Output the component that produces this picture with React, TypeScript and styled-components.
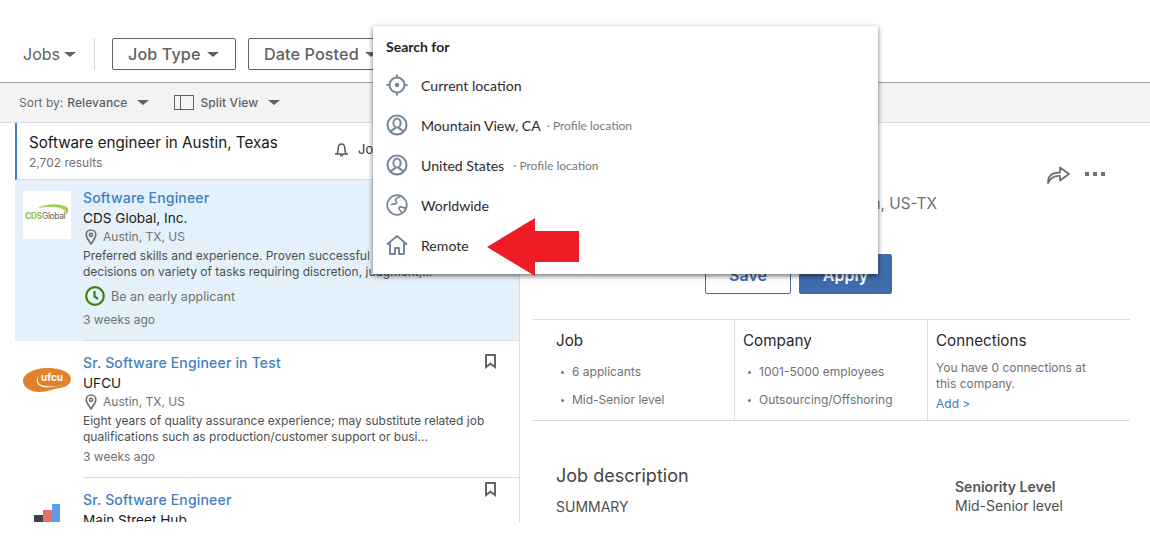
import * as React from 'react';
import styled, { createGlobalStyle } from 'styled-components';

const GlobalStyle = createGlobalStyle`
  html, body {
    margin: 0;
    padding: 0;
    background: #fff;
  }
  * {
    box-sizing: border-box;
  }
`;

const uiFont = 'Inter, "Liberation Sans", sans-serif';

const Page = styled.div`
  position: relative;
  width: 1150px;
  height: 522px;
  overflow: hidden;
  font-family: ${uiFont};
  color: #000;
`;

const TopBar = styled.header`
  height: 83px;
  padding: 38px 0 0 23px;
  display: flex;
  align-items: flex-start;
  border-bottom: 1px solid #a4a4a4;
  position: relative;
`;

const JobsMenu = styled.div`
  display: flex;
  align-items: center;
  gap: 4px;
  height: 32px;
  padding-right: 18px;
  margin-right: 17px;
  font-size: 16px;
  color: #5f6163;
  border-right: 1px solid #d8d8d8;
`;

const FilterButton = styled.div<{ $w: number }>`
  display: flex;
  align-items: center;
  gap: 6px;
  height: 32px;
  width: ${(p) => p.$w}px;
  margin-right: 12px;
  padding-left: 15px;
  border: 1px solid #5f6163;
  border-radius: 2px;
  font-size: 16.2px;
  font-weight: 500;
  letter-spacing: 0.1px;
  color: #5f6163;
  white-space: nowrap;
  flex-shrink: 0;
`;

const Caret = styled.span<{ $size?: number; $color?: string }>`
  display: inline-block;
  width: 0;
  height: 0;
  border-left: ${(p) => p.$size ?? 6}px solid transparent;
  border-right: ${(p) => p.$size ?? 6}px solid transparent;
  border-top: ${(p) => (p.$size ?? 6) - 1}px solid ${(p) => p.$color ?? '#5f6163'};
`;

const SortBar = styled.div`
  height: 40px;
  padding-left: 19px;
  display: flex;
  align-items: center;
  background: #f3f3f3;
  border-bottom: 1px solid #dcdcdc;
  font-size: 12px;
  color: #6a6c6e;
`;

const SortGroup = styled.div`
  display: flex;
  align-items: center;
  margin-right: 25px;
`;

const SortValue = styled.span`
  margin-left: 4px;
  margin-right: 10px;
  font-weight: 500;
  letter-spacing: 0.1px;
  color: #5f6163;
`;

const SplitIcon = styled.span`
  width: 20px;
  height: 15px;
  margin-right: 2px;
  border: 1.5px solid #5f6163;
  position: relative;
  &::before {
    content: "";
    position: absolute;
    left: 5px;
    top: 0;
    bottom: 0;
    border-left: 1.5px solid #5f6163;
  }
`;

const Body = styled.div`
  display: flex;
`;

const LeftColumn = styled.section`
  width: 505px;
  margin-left: 15px;
  flex-shrink: 0;
  border-right: 1px solid #dcdcdc;
  height: 399px;
`;

const ResultsHead = styled.div`
  height: 57px;
  padding: 10px 0 0 12px;
  border-left: 2px solid #3f7fc1;
  border-bottom: 1px solid #dcdcdc;
  position: relative;
`;

const ResultsTitle = styled.div`
  font-size: 15.2px;
  line-height: 20px;
  color: #1a1a1a;
`;

const ResultsCount = styled.div`
  margin-top: 1px;
  font-size: 12px;
  line-height: 18px;
  color: #6f7173;
`;

const AlertToggle = styled.div`
  position: absolute;
  left: 317px;
  top: 18px;
  display: flex;
  align-items: center;
  gap: 9px;
  font-size: 13px;
  white-space: nowrap;
  color: #333;
`;

const JobCard = styled.article<{ $active?: boolean; $height: number; $pad: number }>`
  position: relative;
  height: ${(p) => p.$height}px;
  padding: ${(p) => p.$pad}px 0 0 8px;
  display: flex;
  background: ${(p) => (p.$active ? '#e4f1fa' : '#fff')};
`;

const LogoSlot = styled.div<{ $white?: boolean }>`
  width: 48px;
  height: 48px;
  margin: 3px 12px 0 0;
  flex-shrink: 0;
  display: flex;
  align-items: center;
  justify-content: center;
  background: ${(p) => (p.$white ? '#fff' : 'transparent')};
`;

const CardBody = styled.div<{ $rule?: boolean }>`
  flex: 1;
  min-width: 0;
  height: 100%;
  border-bottom: ${(p) => (p.$rule ? '1px solid #dcdcdc' : 'none')};
`;

const JobTitle = styled.div`
  font-size: 14px;
  line-height: 20px;
  font-weight: 500;
  letter-spacing: 0.18px;
  color: #3f7fc1;
  white-space: nowrap;
`;

const Company = styled.div`
  font-size: 13.6px;
  line-height: 20px;
  color: #1a1a1a;
`;

const LocationRow = styled.div`
  display: flex;
  align-items: center;
  gap: 6px;
  margin: 1px 0 0 2px;
  font-size: 12px;
  line-height: 16px;
  color: #6f7173;
`;

const Snippet = styled.div`
  margin-top: 3px;
  width: 404px;
  font-size: 12px;
  line-height: 16px;
  color: #4d4f51;
`;

const EarlyRow = styled.div`
  display: flex;
  align-items: center;
  gap: 6px;
  margin: 5px 0 0 2px;
  height: 22px;
  font-size: 12.5px;
  color: #6f7173;
`;

const TimeAgo = styled.div<{ $gap: number }>`
  margin-top: ${(p) => p.$gap}px;
  font-size: 12px;
  line-height: 16px;
  color: #6f7173;
`;

const BookmarkSlot = styled.span<{ $top: number }>`
  position: absolute;
  right: 23px;
  top: ${(p) => p.$top}px;
  line-height: 0;
`;

const Detail = styled.section`
  flex: 1;
  padding: 0 20px 0 13px;
  position: relative;
  min-width: 0;
`;

const DetailTop = styled.div`
  height: 196px;
  position: relative;
`;

const DetailActions = styled.div`
  position: absolute;
  right: 25px;
  top: 41px;
  display: flex;
  align-items: center;
  gap: 14px;
`;

const Dots = styled.span`
  display: flex;
  gap: 4px;
  & > i {
    width: 4px;
    height: 4px;
    background: #6f7173;
  }
`;

const LocationLine = styled.div`
  position: absolute;
  left: 0;
  right: 193px;
  top: 71px;
  text-align: right;
  font-size: 15.4px;
  line-height: 20px;
  color: #6f7173;
`;

const ButtonRow = styled.div`
  position: absolute;
  left: 172px;
  top: 131px;
  display: flex;
  gap: 8px;
`;

const SaveButton = styled.div`
  width: 86px;
  height: 40px;
  display: flex;
  align-items: center;
  justify-content: center;
  padding-top: 2px;
  border: 1px solid #3f6cad;
  border-radius: 2px;
  color: #3f6cad;
  font-size: 16px;
  font-weight: 600;
`;

const ApplyButton = styled(SaveButton)`
  width: 93px;
  background: #3f6cad;
  color: #fff;
`;

const Stats = styled.div`
  display: flex;
  height: 102px;
  border-top: 1px solid #dcdcdc;
  border-bottom: 1px solid #dcdcdc;
`;

const StatCol = styled.div<{ $w: number; $pad: number }>`
  width: ${(p) => p.$w}px;
  flex-shrink: 0;
  padding: 11px 0 0 ${(p) => p.$pad}px;
  & + & {
    border-left: 1px solid #dcdcdc;
  }
`;

const StatTitle = styled.div`
  font-size: 15.2px;
  line-height: 20px;
  color: #2a2a2a;
`;

const StatList = styled.ul`
  list-style: none;
  margin: 13px 0 0 0;
  padding: 0;
`;

const StatItem = styled.li`
  position: relative;
  padding-left: 16px;
  font-size: 12px;
  line-height: 16px;
  color: #6f7173;
  white-space: nowrap;
  & + & {
    margin-top: 12px;
  }
  &::before {
    content: "";
    position: absolute;
    left: 5px;
    top: 7px;
    width: 3px;
    height: 3px;
    border-radius: 50%;
    background: #77797b;
  }
`;

const StatText = styled.div`
  margin-top: 9px;
  font-size: 12px;
  line-height: 16px;
  color: #6f7173;
  width: 150px;
`;

const AddLink = styled.div`
  margin-top: 4px;
  font-size: 12px;
  line-height: 16px;
  color: #3a76c0;
`;

const Description = styled.div`
  display: flex;
  justify-content: space-between;
  padding: 43px 0 0 23px;
`;

const DescriptionHead = styled.h2`
  margin: 0;
  font-size: 18px;
  line-height: 24px;
  font-weight: 400;
  color: #444;
`;

const DescriptionText = styled.div<{ $gap: number }>`
  margin-top: ${(p) => p.$gap}px;
  font-size: 14px;
  line-height: 18px;
  color: #4d4f51;
  white-space: nowrap;
`;

const Criteria = styled.div`
  width: 175px;
  padding-top: 13px;
  font-size: 14px;
  line-height: 20px;
  color: #4d4f51;
`;

const CriteriaLabel = styled.div`
  margin-bottom: -1px;
  font-weight: 600;
  color: #55575a;
`;

const Dropdown = styled.div`
  position: absolute;
  left: 373px;
  top: 26px;
  width: 505px;
  height: 248px;
  padding: 11px 13px 0;
  background: #fff;
  box-shadow: 0 2px 5px rgba(0, 0, 0, 0.55);
  font-family: Lato, "Liberation Sans", sans-serif;
`;

const DropdownTitle = styled.div`
  font-size: 14px;
  line-height: 20px;
  font-weight: 700;
  color: #1f1f1f;
  margin-bottom: 8px;
`;

const DropdownRow = styled.div`
  display: flex;
  align-items: center;
  height: 40px;
  font-size: 14.1px;
  color: #2b2b2b;
`;

const RowIcon = styled.span`
  width: 22px;
  margin-right: 13px;
  line-height: 0;
  flex-shrink: 0;
`;

const RowNote = styled.span<{ $gap: number }>`
  margin-left: ${(p) => p.$gap}px;
  font-size: 12px;
  color: #77797b;
`;

const ArrowOverlay = styled.svg`
  position: absolute;
  left: 487px;
  top: 218px;
`;

const PinIcon = () => (
  <svg width="12" height="16" viewBox="0 0 12 16" fill="none" stroke="#6f7173" strokeWidth="1.6">
    <path d="M6 15C4 11.5 1.2 9 1.2 5.8a4.8 4.8 0 0 1 9.6 0C10.800 9 8 11.500 6 15z" />
    <circle cx="6" cy="5.800" r="1.600" />
  </svg>
);

const BookmarkIcon = () => (
  <svg width="11" height="15" viewBox="0 0 11 15" fill="none" stroke="#626466" strokeWidth="2">
    <path d="M1 1h9v12L5.500 9.800 1 13z" />
  </svg>
);

const BellIcon = () => (
  <svg width="15" height="15" viewBox="0 0 15 15" fill="none" stroke="#55575a" strokeWidth="1.500">
    <path d="M1 12h13M3 12c1-2 1-3.500 1.200-6 .2-2.500 1.500-4 3.300-4s3.100 1.500 3.300 4c.2 2.500.2 4 1.200 6" />
    <path d="M6 13.500h3" />
  </svg>
);

const ClockIcon = () => (
  <svg width="20" height="20" viewBox="0 0 20 20" fill="none" stroke="#3f7f12" strokeWidth="2.200">
    <circle cx="10" cy="10" r="8.800" />
    <path d="M9.500 5v5.500l3.500 2.500" />
  </svg>
);

const ShareIcon = () => (
  <svg width="24" height="20" viewBox="0 0 24 20" fill="none" stroke="#6f7173" strokeWidth="1.800">
    <path d="M1 19c0-7 4-10.500 12-10.500V3.500L22 10l-9 6.500v-4.500c-5.500-.5-9 1-12 7z" strokeLinejoin="round" />
  </svg>
);

const iconStroke = '#77879a';

const TargetIcon = () => (
  <svg width="22" height="22" viewBox="0 0 22 22" fill="none" stroke={iconStroke} strokeWidth="2">
    <circle cx="11" cy="11" r="7.500" />
    <circle cx="11" cy="11" r="1.300" fill={iconStroke} />
    <path d="M11 0.500v3M11 18.500v3M0.500 11h3M18.500 11h3" />
  </svg>
);

const ProfileIcon = () => (
  <svg width="22" height="22" viewBox="0 0 22 22" fill="none" stroke={iconStroke} strokeWidth="2">
    <circle cx="11" cy="11" r="9.500" />
    <ellipse cx="11" cy="9" rx="3.600" ry="4.600" />
    <path d="M4.500 18c1-3 4.500-2.500 5-4.500M17.500 18c-1-3-4.500-2.500-5-4.500" />
  </svg>
);

const GlobeIcon = () => (
  <svg width="22" height="22" viewBox="0 0 22 22" fill="none" stroke={iconStroke} strokeWidth="1.700">
    <circle cx="11" cy="11" r="9.800" />
    <path d="M14 1.600c-1 2.400-3.500 2-4.500 3.900-.8 1.600 2 2.200 1 3.700-1 1.400-4 0-5.500 1.800M16 19c-.5-2.500-3-2.500-3-4.800 0-1.700 2.700-1.500 4-.7 1 .6 2.200.5 3.500-.3" />
  </svg>
);

const HomeIcon = () => (
  <svg width="22" height="22" viewBox="0 0 22 22" fill="none" stroke={iconStroke} strokeWidth="2">
    <path d="M1 10.500L11 2l10 8.500M4 8.500V20h5v-6h4v6h5V8.500" strokeLinejoin="round" />
  </svg>
);

const CdsLogo = () => (
  <svg width="46" height="24" viewBox="0 0 46 24">
    <path d="M14 5C22 0 38 0 44 5c1 2 0 5-2 7 1-5-6-8-13-8-6 0-11 0-15 1z" fill="#a6cf5a" />
    <text x="1" y="16" fontFamily="Inter, sans-serif" fontSize="8.500" fontWeight="700" fill="#8cc63f" letterSpacing="-0.500">CDS</text>
    <text x="18" y="16" fontFamily="Inter, sans-serif" fontSize="8.500" fill="#5d5f61" letterSpacing="-0.400">Global</text>
  </svg>
);

const UfcuLogo = () => (
  <svg width="48" height="24" viewBox="0 0 48 24">
    <path d="M0 13C0 6 11 0 25 0c12 0 23 4 23 11 0 5-5 8-11 9C29 21 24 24 17 24 7 24 0 19 0 13z" fill="#e1812c" />
    <path d="M15 8c-1 5 0 9 7 10 8 1 16 0 22-3-6 3-16 5-23 4C14 18 12 13 15 8z" fill="#fff" />
    <text x="18" y="13" fontFamily="Inter, sans-serif" fontSize="10" fontWeight="700" fill="#fff">ufcu</text>
  </svg>
);

const HubLogo = () => (
  <svg width="28" height="48" viewBox="0 0 28 48">
    <rect x="1" y="22" width="9" height="26" fill="#3f424a" />
    <rect x="10" y="17" width="9" height="31" fill="#e8705f" />
    <rect x="19" y="11" width="8" height="37" fill="#5e9bea" />
  </svg>
);

const jobsStats = ['6 applicants', 'Mid-Senior level'];
const companyStats = ['1001-5000 employees', 'Outsourcing/Offshoring'];

const App = () => (
  <Page>
    <GlobalStyle />
    <TopBar>
      <JobsMenu>
        Jobs
        <Caret />
      </JobsMenu>
      <FilterButton $w={124}>
        Job Type
        <Caret />
      </FilterButton>
      <FilterButton $w={134}>
        Date Posted
        <Caret />
      </FilterButton>
    </TopBar>
    <SortBar>
      <SortGroup>
        Sort by:
        <SortValue>Relevance</SortValue>
        <Caret />
      </SortGroup>
      <SortGroup>
        <SplitIcon />
        <SortValue>Split View</SortValue>
        <Caret />
      </SortGroup>
    </SortBar>
    <Body>
      <LeftColumn>
        <ResultsHead>
          <ResultsTitle>Software engineer in Austin, Texas</ResultsTitle>
          <ResultsCount>2,702 results</ResultsCount>
          <AlertToggle>
            <BellIcon />
            Job alert
          </AlertToggle>
        </ResultsHead>
        <JobCard $active $height={161} $pad={8}>
          <LogoSlot $white>
            <CdsLogo />
          </LogoSlot>
          <CardBody $rule>
            <JobTitle>Software Engineer</JobTitle>
            <Company>CDS Global, Inc.</Company>
            <LocationRow>
              <PinIcon />
              Austin, TX, US
            </LocationRow>
            <Snippet>
              Preferred skills and experience. Proven successful experience making
              <br />
              decisions on variety of tasks requiring discretion, judgment,...
            </Snippet>
            <EarlyRow>
              <ClockIcon />
              Be an early applicant
            </EarlyRow>
            <TimeAgo $gap={5}>3 weeks ago</TimeAgo>
          </CardBody>
        </JobCard>
        <JobCard $height={137} $pad={12}>
          <LogoSlot>
            <UfcuLogo />
          </LogoSlot>
          <CardBody $rule>
            <JobTitle>Sr. Software Engineer in Test</JobTitle>
            <Company>UFCU</Company>
            <LocationRow>
              <PinIcon />
              Austin, TX, US
            </LocationRow>
            <Snippet>
              Eight years of quality assurance experience; may substitute related job
              qualifications such as production/customer support or busi...
            </Snippet>
            <TimeAgo $gap={4}>3 weeks ago</TimeAgo>
          </CardBody>
          <BookmarkSlot $top={13}>
            <BookmarkIcon />
          </BookmarkSlot>
        </JobCard>
        <JobCard $height={60} $pad={12}>
          <LogoSlot>
            <HubLogo />
          </LogoSlot>
          <CardBody>
            <JobTitle>Sr. Software Engineer</JobTitle>
            <Company>Main Street Hub</Company>
          </CardBody>
          <BookmarkSlot $top={4}>
            <BookmarkIcon />
          </BookmarkSlot>
        </JobCard>
      </LeftColumn>
      <Detail>
        <DetailTop>
          <DetailActions>
            <ShareIcon />
            <Dots>
              <i />
              <i />
              <i />
            </Dots>
          </DetailActions>
          <LocationLine>Austin, US-TX</LocationLine>
          <ButtonRow>
            <SaveButton>Save</SaveButton>
            <ApplyButton>Apply</ApplyButton>
          </ButtonRow>
        </DetailTop>
        <Stats>
          <StatCol $w={201} $pad={23}>
            <StatTitle>Job</StatTitle>
            <StatList>
              {jobsStats.map((s) => <StatItem key={s}>{s}</StatItem>)}
            </StatList>
          </StatCol>
          <StatCol $w={193} $pad={8}>
            <StatTitle>Company</StatTitle>
            <StatList>
              {companyStats.map((s) => <StatItem key={s}>{s}</StatItem>)}
            </StatList>
          </StatCol>
          <StatCol $w={203} $pad={8}>
            <StatTitle>Connections</StatTitle>
            <StatText>You have 0 connections at this company.</StatText>
            <AddLink>Add &gt;</AddLink>
          </StatCol>
        </Stats>
        <Description>
          <div>
            <DescriptionHead>Job description</DescriptionHead>
            <DescriptionText $gap={10}>SUMMARY</DescriptionText>
            <DescriptionText $gap={3}>Works with the development team to build and</DescriptionText>
          </div>
          <Criteria>
            <CriteriaLabel>Seniority Level</CriteriaLabel>
            Mid-Senior level
          </Criteria>
        </Description>
      </Detail>
    </Body>
    <Dropdown>
      <DropdownTitle>Search for</DropdownTitle>
      <DropdownRow>
        <RowIcon><TargetIcon /></RowIcon>
        Current location
      </DropdownRow>
      <DropdownRow>
        <RowIcon><ProfileIcon /></RowIcon>
        Mountain View, CA
        <RowNote $gap={6}>· Profile location</RowNote>
      </DropdownRow>
      <DropdownRow>
        <RowIcon><ProfileIcon /></RowIcon>
        United States
        <RowNote $gap={9}>· Profile location</RowNote>
      </DropdownRow>
      <DropdownRow>
        <RowIcon><GlobeIcon /></RowIcon>
        Worldwide
      </DropdownRow>
      <DropdownRow>
        <RowIcon><HomeIcon /></RowIcon>
        Remote
      </DropdownRow>
    </Dropdown>
    <ArrowOverlay width="93" height="59" viewBox="0 0 93 59">
      <path d="M0 29L48 0V13H92V44H48V58z" fill="#ee1c25" />
    </ArrowOverlay>
  </Page>
);

export default App;
